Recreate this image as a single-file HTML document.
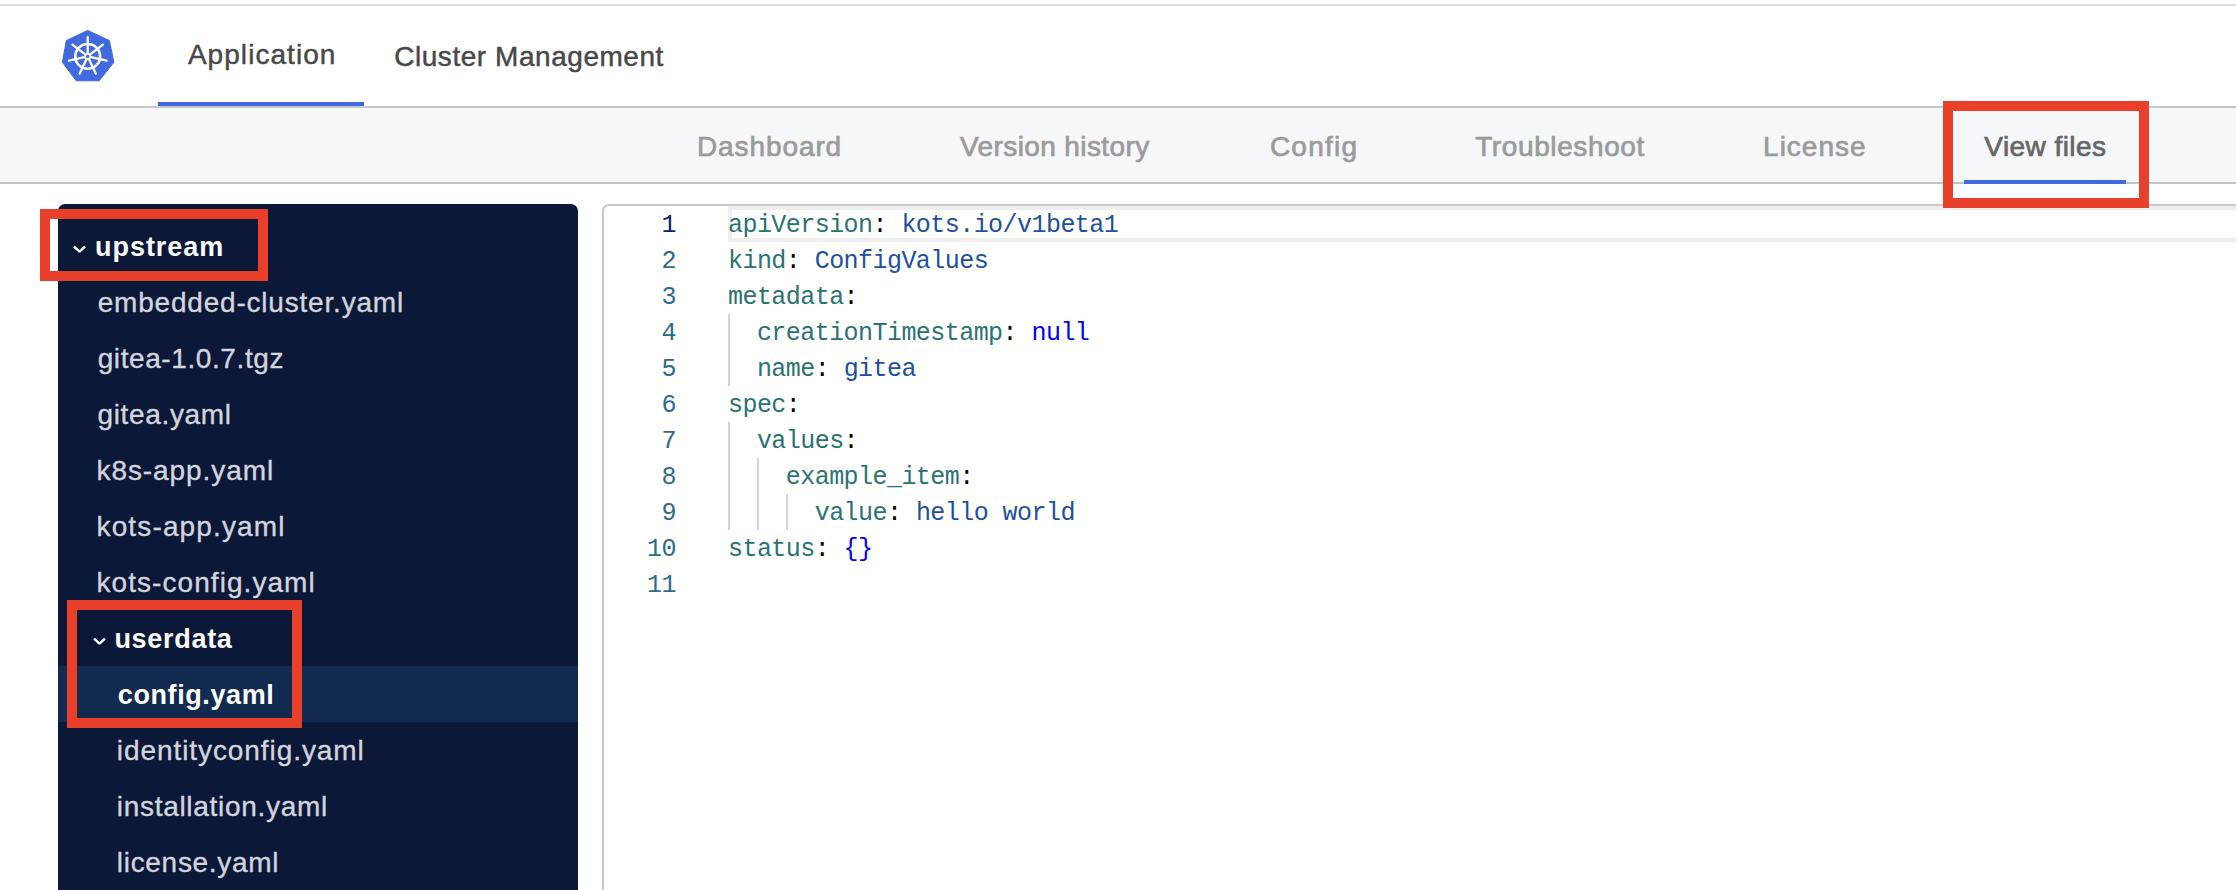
<!DOCTYPE html>
<html><head><meta charset="utf-8">
<style>
html,body{margin:0;padding:0;}
body{width:2236px;height:890px;overflow:hidden;position:relative;background:#ffffff;font-family:"Liberation Sans",sans-serif;}
.abs{position:absolute;}
.t{position:absolute;white-space:pre;line-height:1;}
.nav{color:#484848;-webkit-text-stroke:0.45px #484848;}
.sub{color:#9b9b9b;-webkit-text-stroke:0.7px #9b9b9b;}
.sub.act{color:#666666;-webkit-text-stroke:0.7px #666666;}
.file{color:#d2d5de;-webkit-text-stroke:0.35px #d2d5de;}
.dir{color:#ffffff;font-weight:bold;}
.code{position:absolute;white-space:pre;font-family:"Liberation Mono",monospace;font-size:25px;letter-spacing:-0.552px;line-height:36px;height:36px;}
.k{color:#2a7373;}
.p{color:#000000;}
.v{color:#1d50a2;}
.kw{color:#0000ff;}
.guide{position:absolute;width:2px;background:#d3d3d3;}
.red{position:absolute;border:10px solid #e8402a;box-sizing:border-box;}

</style></head><body>
<div class="abs" style="left:0;top:4px;width:2236px;height:2px;background:#dfe1de"></div>
<svg class="abs" style="left:62px;top:30px" width="53" height="52" viewBox="62 30 53 52">
  <path d="M87.7 30.4 L109.4 40.6 L113.9 62.2 L99.2 80.8 L76.2 80.8 L62.4 62.2 L66.3 40.6 Z" fill="#416ade" stroke="#416ade" stroke-width="1" stroke-linejoin="round"/>
  <circle cx="87.7" cy="56.4" r="12.4" stroke="#ffffff" stroke-width="2.6" fill="none"/>
  <g stroke="#ffffff" stroke-width="2.3" stroke-linecap="round">
    <line x1="87.7" y1="56.4" x2="87.7" y2="37.2"/>
    <line x1="87.7" y1="56.4" x2="102.9" y2="44.6"/>
    <line x1="87.7" y1="56.4" x2="106.5" y2="60.7"/>
    <line x1="87.7" y1="56.4" x2="95.7" y2="73.6"/>
    <line x1="87.7" y1="56.4" x2="79.7" y2="73.6"/>
    <line x1="87.7" y1="56.4" x2="68.9" y2="60.7"/>
    <line x1="87.7" y1="56.4" x2="72.5" y2="44.6"/>
  </g>
  <circle cx="87.7" cy="56.4" r="3.4" fill="#ffffff"/>
  <circle cx="87.7" cy="56.4" r="1.7" fill="#416ade"/>
</svg>
<div class="t nav" style="left:187.9px;top:40.8px;font-size:28px;letter-spacing:1.050px">Application</div>
<div class="t nav" style="left:394.2px;top:42.9px;font-size:28px;letter-spacing:0.547px">Cluster Management</div>

<div class="abs" style="left:158px;top:102px;width:206px;height:4px;background:#416ade"></div>
<div class="abs" style="left:0;top:106px;width:2236px;height:2px;background:#c4c8ca"></div>
<div class="abs" style="left:0;top:108px;width:2236px;height:74px;background:#f6f7f9"></div>
<div class="abs" style="left:0;top:182px;width:2236px;height:2px;background:#c1c5c8"></div>
<div class="t sub" style="left:697.0px;top:133.2px;font-size:28px;letter-spacing:0.900px">Dashboard</div>
<div class="t sub" style="left:960.0px;top:133.2px;font-size:28px;letter-spacing:0.400px">Version history</div>
<div class="t sub" style="left:1269.9px;top:133.2px;font-size:28px;letter-spacing:1.260px">Config</div>
<div class="t sub" style="left:1475.2px;top:133.2px;font-size:28px;letter-spacing:0.609px">Troubleshoot</div>
<div class="t sub" style="left:1763.1px;top:133.2px;font-size:28px;letter-spacing:0.983px">License</div>
<div class="t sub act" style="left:1984.3px;top:133.2px;font-size:28px;letter-spacing:0.444px">View files</div>

<div class="abs" style="left:1964px;top:180px;width:162px;height:4px;background:#416ade"></div>

<div class="abs" style="left:58px;top:204px;width:520px;height:720px;background:#0c1838;border-radius:7px 7px 0 0"></div>
<div class="abs" style="left:58px;top:666px;width:520px;height:56px;background:#122a4f"></div>
<svg class="abs" style="left:73px;top:245px" width="14" height="9" viewBox="0 0 14 9"><path d="M1 1.6 L6.5 6.6 L12 1.6" stroke="#fff" stroke-width="2.4" stroke-linejoin="bevel" fill="none"/></svg>
<div class="t dir" style="left:95.1px;top:234.1px;font-size:27px;letter-spacing:0.929px">upstream</div>
<div class="t file" style="left:97.7px;top:289.1px;font-size:28px;letter-spacing:0.800px">embedded-cluster.yaml</div>
<div class="t file" style="left:97.7px;top:345.1px;font-size:28px;letter-spacing:0.593px">gitea-1.0.7.tgz</div>
<div class="t file" style="left:97.5px;top:401.1px;font-size:28px;letter-spacing:0.656px">gitea.yaml</div>
<div class="t file" style="left:96.5px;top:457.1px;font-size:28px;letter-spacing:0.918px">k8s-app.yaml</div>
<div class="t file" style="left:96.5px;top:513.1px;font-size:28px;letter-spacing:1.142px">kots-app.yaml</div>
<div class="t file" style="left:96.5px;top:569.1px;font-size:28px;letter-spacing:1.060px">kots-config.yaml</div>

<svg class="abs" style="left:93px;top:637px" width="14" height="9" viewBox="0 0 14 9"><path d="M1 1.6 L6.5 6.6 L12 1.6" stroke="#fff" stroke-width="2.4" stroke-linejoin="bevel" fill="none"/></svg>
<div class="t dir" style="left:114.4px;top:626.1px;font-size:27px;letter-spacing:0.700px">userdata</div>
<div class="t dir" style="left:117.8px;top:682.1px;font-size:27px;letter-spacing:0.590px">config.yaml</div>
<div class="t file" style="left:116.8px;top:737.1px;font-size:28px;letter-spacing:0.928px">identityconfig.yaml</div>
<div class="t file" style="left:116.8px;top:793.1px;font-size:28px;letter-spacing:0.700px">installation.yaml</div>
<div class="t file" style="left:116.8px;top:849.1px;font-size:28px;letter-spacing:0.700px">license.yaml</div>


<div class="abs" style="left:602px;top:204px;width:1700px;height:720px;border:2px solid #c4c8ca;border-radius:7px;background:#fffffe;box-sizing:border-box"></div>
<div class="abs" style="left:728px;top:206px;width:1600px;height:36px;border:4px solid #eeeeee;box-sizing:border-box"></div>
<div class="guide" style="left:728px;top:314px;height:72px"></div>
<div class="guide" style="left:728px;top:422px;height:108px"></div>
<div class="guide" style="left:757px;top:458px;height:72px"></div>
<div class="guide" style="left:786px;top:494px;height:36px"></div>
<div class="code" style="left:602px;top:208.0px;width:74px;text-align:right;color:#0b216f">1</div>
<div class="code" style="left:728px;top:208.0px"><span class="k">apiVersion</span><span class="p">:</span> <span class="v">kots.io/v1beta1</span></div>
<div class="code" style="left:602px;top:244.0px;width:74px;text-align:right;color:#2e6b8c">2</div>
<div class="code" style="left:728px;top:244.0px"><span class="k">kind</span><span class="p">:</span> <span class="v">ConfigValues</span></div>
<div class="code" style="left:602px;top:280.0px;width:74px;text-align:right;color:#2e6b8c">3</div>
<div class="code" style="left:728px;top:280.0px"><span class="k">metadata</span><span class="p">:</span></div>
<div class="code" style="left:602px;top:316.0px;width:74px;text-align:right;color:#2e6b8c">4</div>
<div class="code" style="left:728px;top:316.0px">  <span class="k">creationTimestamp</span><span class="p">:</span> <span class="kw">null</span></div>
<div class="code" style="left:602px;top:352.0px;width:74px;text-align:right;color:#2e6b8c">5</div>
<div class="code" style="left:728px;top:352.0px">  <span class="k">name</span><span class="p">:</span> <span class="v">gitea</span></div>
<div class="code" style="left:602px;top:388.0px;width:74px;text-align:right;color:#2e6b8c">6</div>
<div class="code" style="left:728px;top:388.0px"><span class="k">spec</span><span class="p">:</span></div>
<div class="code" style="left:602px;top:424.0px;width:74px;text-align:right;color:#2e6b8c">7</div>
<div class="code" style="left:728px;top:424.0px">  <span class="k">values</span><span class="p">:</span></div>
<div class="code" style="left:602px;top:460.0px;width:74px;text-align:right;color:#2e6b8c">8</div>
<div class="code" style="left:728px;top:460.0px">    <span class="k">example_item</span><span class="p">:</span></div>
<div class="code" style="left:602px;top:496.0px;width:74px;text-align:right;color:#2e6b8c">9</div>
<div class="code" style="left:728px;top:496.0px">      <span class="k">value</span><span class="p">:</span> <span class="v">hello world</span></div>
<div class="code" style="left:602px;top:532.0px;width:74px;text-align:right;color:#2e6b8c">10</div>
<div class="code" style="left:728px;top:532.0px"><span class="k">status</span><span class="p">:</span> <span class="kw">{}</span></div>
<div class="code" style="left:602px;top:568.0px;width:74px;text-align:right;color:#2e6b8c">11</div>

<div class="red" style="left:40px;top:209px;width:228px;height:72px"></div>
<div class="red" style="left:67px;top:600px;width:235px;height:128px"></div>
<div class="red" style="left:1943px;top:101px;width:206px;height:107px"></div>
</body></html>
